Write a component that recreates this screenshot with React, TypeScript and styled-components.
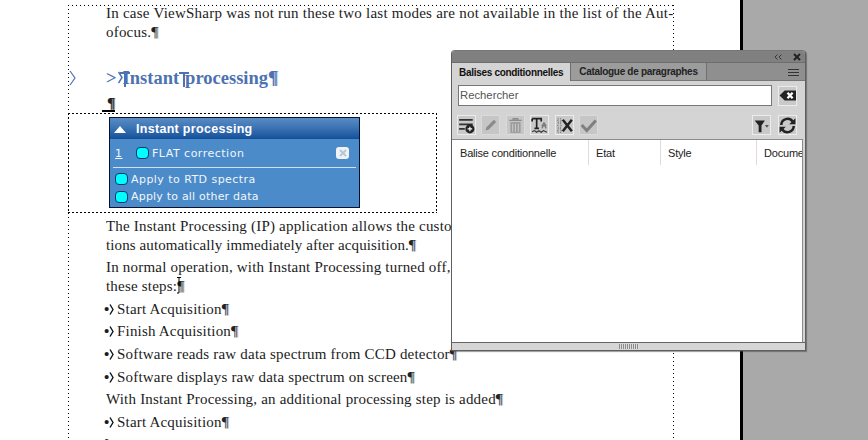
import React from "react";
import styled, { createGlobalStyle } from "styled-components";

const Global = createGlobalStyle`
  html, body { margin: 0; padding: 0; width: 868px; height: 440px; overflow: hidden; background: #a9a9a9; }
  #root { width: 868px; height: 440px; }
`;

const Screen = styled.div`
  position: relative;
  width: 868px;
  height: 440px;
  overflow: hidden;
  background: #a9a9a9;
  display: flex;
`;
const DocPage = styled.div`
  box-sizing: border-box;
  width: 743px;
  height: 440px;
  padding: 5px 0 0 68px;
  background: #fff;
  border-right: 3px solid #000;
  flex: none;
`;
const Frame = styled.div`
  box-sizing: border-box;
  width: 606px;
  height: 460px;
  padding: 1px 1px 0 1px;
  background-image:
    repeating-linear-gradient(90deg, #000 0 1px, transparent 1px 4px),
    repeating-linear-gradient(180deg, #000 0 1px, transparent 1px 4px),
    repeating-linear-gradient(180deg, #000 0 1px, transparent 1px 4px);
  background-size: 100% 1px, 1px 100%, 1px 100%;
  background-position: 0 0, 0 0, 100% 0;
  background-repeat: no-repeat;
  font-family: "Liberation Serif", serif;
  font-size: 15px;
  color: #1c1c22;
`;
const Line = styled.div<{ $top?: number; $w?: number }>`
  height: 19px;
  line-height: 19px;
  margin-top: ${(p) => p.$top ?? 0}px;
  padding-left: 37px;
  white-space: nowrap;
  letter-spacing: ${(p) => p.$w ?? 0.2}px;
`;
const Pilcrow = styled.span<{ $blue?: boolean }>`
  color: ${(p) => (p.$blue ? "#4d72b2" : "#222")};
  text-shadow: 1px 0 ${(p) => (p.$blue ? "#b5c3dd" : "#aab0b4")};
`;
const Bullet = styled.span`
  display: inline-flex;
  align-items: center;
  width: 11px;
  margin-left: -2px;
  margin-right: 2px;
  font-weight: bold;
`;
const Heading = styled.div`
  position: relative;
  height: 22px;
  line-height: 22px;
  margin-top: 25px;
  padding-left: 37px;
  white-space: nowrap;
  font-size: 18.5px;
  font-weight: bold;
  color: #4d72b2;
`;
const MarginMark = styled.svg`
  position: absolute;
  left: 0;
  top: 3px;
`;
const TabMark = styled.svg`
  margin-left: 1px;
`;
const NbspMark = styled.span<{ $before?: number; $after?: number }>`
  display: inline-block;
  position: relative;
  width: 10px;
  height: 15px;
  margin-left: ${(p) => p.$before ?? 0}px;
  margin-right: ${(p) => p.$after ?? 0}px;
  vertical-align: -3px;
  border-top: 2px solid #4d72b2;
  box-sizing: border-box;
  &::before {
    content: "";
    position: absolute;
    left: 4px;
    top: 0;
    width: 2px;
    height: 13px;
    background: #4d72b2;
  }
`;
const AnchorLine = styled.div`
  height: 15px;
  margin-top: 7px;
  padding-left: 33px;
  line-height: 15px;
  font-weight: bold;
  font-size: 15px;
`;
const Anchor = styled.span`
  display: inline-block;
  width: 13px;
  border-bottom: 2px solid #000;
  height: 13px;
  line-height: 13px;
  text-align: right;
  color: #222;
  text-shadow: 1px 0 #999;
`;
const WidgetFrame = styled.div`
  box-sizing: border-box;
  width: 369px;
  height: 100px;
  margin: 2px 0 0 -1px;
  padding: 4px 0 0 41px;
  background-image:
    repeating-linear-gradient(90deg, #000 0 2px, transparent 2px 4px),
    repeating-linear-gradient(90deg, #000 0 2px, transparent 2px 4px),
    repeating-linear-gradient(180deg, #000 0 2px, transparent 2px 4px),
    repeating-linear-gradient(180deg, #000 0 2px, transparent 2px 4px);
  background-size: 100% 1px, 100% 1px, 1px 100%, 1px 100%;
  background-position: 0 0, 0 100%, 0 0, 100% 0;
  background-repeat: no-repeat;
`;
const Widget = styled.div`
  box-sizing: border-box;
  width: 251px;
  height: 91px;
  border: 1px solid #04122e;
  background: #4c8bc9;
  font-family: "DejaVu Sans", sans-serif;
  color: #f0f6fb;
  font-size: 11px;
`;
const WidgetHead = styled.div`
  display: flex;
  align-items: center;
  height: 21px;
  padding-left: 3px;
  gap: 9px;
  background: linear-gradient(#5a8cc4 0%, #3d74b4 45%, #14509a 100%);
  font-family: "Liberation Sans", sans-serif;
  font-weight: bold;
  font-size: 12.5px;
  letter-spacing: 0.3px;
  color: #fff;
`;
const WidgetRow = styled.div<{ $h?: number; $w?: number }>`
  display: flex;
  align-items: center;
  height: ${(p) => p.$h ?? 17}px;
  padding-left: 5px;
  letter-spacing: ${(p) => p.$w ?? 0.2}px;
  white-space: nowrap;
`;
const StepNo = styled.span`
  width: 21px;
  text-decoration: underline;
`;
const Led = styled.span`
  flex: none;
  width: 11px;
  height: 10px;
  margin-right: 3px;
  border-radius: 4px;
  border: 1px solid #06396f;
  background: #0ff;
`;
const CloseChip = styled.span`
  margin-left: auto;
  margin-right: 10px;
  width: 13px;
  height: 12px;
  border-radius: 3px;
  background: #eef3f7;
  display: grid;
  place-items: center;
`;
const WidgetRule = styled.div`
  height: 1px;
  margin: 0 3px 2px 3px;
  background: #cfe2f3;
`;
const Cursor = styled.svg`
  position: absolute;
  left: 176px;
  top: 277px;
`;

const Palette = styled.div`
  position: absolute;
  left: 451px;
  top: 50px;
  box-sizing: border-box;
  width: 355px;
  height: 301px;
  border: 1px solid #5e5e5e;
  border-top-color: #777;
  border-radius: 4px 4px 0 0;
  background: #d4d4d4;
  box-shadow: 1px 1px 1px rgba(70, 70, 70, 0.55);
  font-family: "Liberation Sans", sans-serif;
  display: flex;
  flex-direction: column;
`;
const TitleBar = styled.div`
  box-sizing: border-box;
  height: 12px;
  flex: none;
  display: flex;
  align-items: center;
  justify-content: flex-end;
  gap: 11px;
  padding-right: 4px;
  background: #808080;
  border-radius: 3px 3px 0 0;
  border-bottom: 1px solid #6e6e6e;
`;
const TabBar = styled.div`
  box-sizing: border-box;
  height: 18px;
  flex: none;
  display: flex;
  background: #8f8f8f;
  align-items: stretch;
  border-bottom: 1px solid #777;
  position: relative;
`;
const Tab = styled.div<{ $active?: boolean }>`
  box-sizing: border-box;
  padding: 0 ${(p) => (p.$active ? 7 : 8)}px;
  display: flex;
  align-items: center;
  font-size: 10px;
  letter-spacing: -0.3px;
  font-weight: bold;
  white-space: nowrap;
  color: ${(p) => (p.$active ? "#111" : "#222")};
  background: ${(p) => (p.$active ? "#d4d4d4" : "#9c9c9c")};
  border-right: 1px solid #6f6f6f;
  margin-bottom: ${(p) => (p.$active ? -1 : 0)}px;
`;
const MenuIcon = styled.svg`
  position: absolute;
  right: 6px;
  top: 5px;
`;
const SearchRow = styled.div`
  flex: none;
  display: flex;
  align-items: center;
  gap: 6px;
  padding: 4px 8px 0 6px;
`;
const SearchInput = styled.div`
  box-sizing: border-box;
  width: 315px;
  height: 21px;
  border: 1px solid #777;
  background: #fff;
  padding-left: 1px;
  font-size: 11.3px;
  line-height: 18px;
  color: #555;
`;
const IconBtn = styled.div<{ $dim?: boolean }>`
  box-sizing: border-box;
  flex: none;
  width: 19px;
  height: 20px;
  display: grid;
  place-items: center;
  border: 1px solid ${(p) => (p.$dim ? "#dadada" : "#ececec")};
  background: ${(p) => (p.$dim ? "#c6c6c6" : "#c9c9c9")};
`;
const FilterBtn = styled(IconBtn)`
  margin-right: 2px;
`;
const ToolRow = styled.div`
  flex: none;
  display: flex;
  gap: 5.4px;
  padding: 9px 8px 0 5px;
`;
const Spacer = styled.div`
  flex: 1;
`;
const ListBox = styled.div`
  flex: 1;
  margin: 4px 2px 0 0;
  background: #fff;
  border-top: 1px solid #8a8a8a;
  border-right: 1px solid #8a8a8a;
  overflow: hidden;
`;
const ListHead = styled.div`
  display: grid;
  grid-template-columns: 136px 72px 96px 60px;
  height: 26px;
  padding-left: 1px;
  font-size: 11px;
  letter-spacing: -0.2px;
  color: #222;
`;
const ListCol = styled.div`
  box-sizing: border-box;
  padding: 7px 0 0 7px;
  white-space: nowrap;
  overflow: hidden;
  height: 25px;
  border-right: 1px solid #dcdcdc;
  &:last-child { border-right: 0; }
`;
const BottomBar = styled.div`
  flex: none;
  height: 7px;
  border-top: 1px solid #666;
  display: flex;
  justify-content: center;
  align-items: center;
  background: #d6d6d6;
`;
const Grip = styled.div`
  width: 20px;
  height: 5px;
  background: repeating-linear-gradient(90deg, #8a8a8a 0 1px, #ddd 1px 2px);
`;

const P = () => <Pilcrow>¶</Pilcrow>;
const B = () => (
  <Bullet>
    •
    <svg width="5" height="11" viewBox="0 0 5 11"><path d="M1 0.5 L4 5.5 L1 10.5" fill="none" stroke="#111" strokeWidth="1.4" /></svg>
  </Bullet>
);

const I = { width: 17, height: 17, viewBox: "0 0 15 15" };

export default function App() {
  return (
    <Screen>
      <Global />
      <DocPage>
        <Frame>
          <Line $top={-2} $w={0.24}>In case ViewSharp was not run these two last modes are not available in the list of the Aut-</Line>
          <Line>ofocus.<P /></Line>
          <Heading>
            <MarginMark width="7" height="16" viewBox="0 0 7 16"><path d="M1 1 L6 8 L1 15" fill="none" stroke="#4d72b2" strokeWidth="1.2" /></MarginMark>
            &gt;
            <TabMark width="5" height="13" viewBox="0 0 5 13"><path d="M0.5 1 L4 6.5 L0.5 12" fill="none" stroke="#4d72b2" strokeWidth="1.5" /></TabMark>
            <NbspMark $before={-3} $after={-7} />
            Instant<NbspMark $after={-4} />processing<Pilcrow $blue>¶</Pilcrow>
          </Heading>
          <AnchorLine><Anchor>¶</Anchor></AnchorLine>
          <WidgetFrame>
            <Widget>
              <WidgetHead>
                <svg width="14" height="10" viewBox="0 0 14 10"><path d="M1 9 L7 2 L13 9 Z" fill="#fff" /></svg>
                Instant processing
              </WidgetHead>
              <WidgetRow $h={28} $w={0.5}>
                <StepNo>1</StepNo>
                <Led />
                FLAT correction
                <CloseChip>
                  <svg width="8" height="8" viewBox="0 0 8 8"><path d="M1 1 L7 7 M7 1 L1 7" stroke="#b9c6d2" strokeWidth="2" /></svg>
                </CloseChip>
              </WidgetRow>
              <WidgetRule />
              <WidgetRow $w={0.45} $h={18}><Led />Apply to RTD spectra</WidgetRow>
              <WidgetRow><Led />Apply to all other data</WidgetRow>
            </Widget>
          </WidgetFrame>
          <Line $top={4}>The Instant Processing (IP) application allows the customer to configure processing opera-</Line>
          <Line $w={0.1}>tions automatically immediately after acquisition.<P /></Line>
          <Line $top={3}>In normal operation, with Instant Processing turned off, the instrument goes through</Line>
          <Line>these steps:<P /></Line>
          <Line $top={4}><B />Start Acquisition<P /></Line>
          <Line $top={3}><B />Finish Acquisition<P /></Line>
          <Line $top={4}><B />Software reads raw data spectrum from CCD detector<P /></Line>
          <Line $top={4}><B />Software displays raw data spectrum on screen<P /></Line>
          <Line $top={3}>With Instant Processing, an additional processing step is added<P /></Line>
          <Line $top={4}><B />Start Acquisition<P /></Line>
          <Line><Bullet>•</Bullet></Line>
        </Frame>
      </DocPage>
      <Cursor width="7" height="17" viewBox="0 0 7 17">
        <path d="M1 0.5 H3 V16 H1 M3 0.5 H5" stroke="#000" strokeWidth="1" fill="none" />
      </Cursor>
      <Palette>
        <TitleBar>
          <svg width="8" height="6" viewBox="0 0 8 6"><path d="M3.5 0.5 L1 3 L3.5 5.5 M7.5 0.5 L5 3 L7.5 5.5" stroke="#3a3a3a" fill="none" /></svg>
          <svg width="8" height="8" viewBox="0 0 8 8"><path d="M1 1 L7 7 M7 1 L1 7" stroke="#222" strokeWidth="2" /></svg>
        </TitleBar>
        <TabBar>
          <Tab $active>Balises conditionnelles</Tab>
          <Tab>Catalogue de paragraphes</Tab>
          <MenuIcon width="11" height="9" viewBox="0 0 11 9"><path d="M0 1.5 H11 M0 4.5 H11 M0 7.5 H11" stroke="#333" /></MenuIcon>
        </TabBar>
        <SearchRow>
          <SearchInput>Rechercher</SearchInput>
          <IconBtn>
            <svg {...I}><path d="M0.5 7.5 L5 3 H15 V12 H5 Z" fill="#222" /><path d="M7.5 5 L12 10 M12 5 L7.5 10" stroke="#fff" strokeWidth="2" /></svg>
          </IconBtn>
        </SearchRow>
        <ToolRow>
          <IconBtn>
            <svg {...I}><path d="M1 2.5 H13 M1 6.5 H13 M1 10.5 H6" stroke="#333" strokeWidth="1.6" /><circle cx="10.5" cy="10.5" r="4" fill="#222" /><path d="M8.5 10.5 H12.5 M10.5 8.5 V12.5" stroke="#fff" /></svg>
          </IconBtn>
          <IconBtn $dim>
            <svg {...I}><path d="M3 12 L4 9 L10.5 2.5 L12.5 4.5 L6 11 Z" fill="#8b8b8b" /></svg>
          </IconBtn>
          <IconBtn $dim>
            <svg {...I}><path d="M2 3 H13 M5.5 3 V1.5 H9.5 V3" stroke="#8d8d8d" fill="none" strokeWidth="1.2" /><path d="M3 4.5 H12 V14 H3 Z" fill="#9c9c9c" /><path d="M5 6 V13 M7.5 6 V13 M10 6 V13" stroke="#c6c6c6" /></svg>
          </IconBtn>
          <IconBtn>
            <svg {...I}><path d="M1 1.5 H9 V4 M5 1.5 V10 M3 10 H7 M1 1.5 V4" stroke="#222" strokeWidth="1.5" fill="none" /><path d="M9.5 8 L11.5 5 L13.5 8 M9.5 10 L11.5 7 L13.5 10" stroke="#777" fill="none" /><path d="M1 13 L3 12 L5 13.5 L7 12 L9 13.5 L11 12 L14 13.5" stroke="#333" fill="none" /></svg>
          </IconBtn>
          <IconBtn>
            <svg {...I}><path d="M1.5 1.5 H4.5 V4.5 H1.5 Z M1.5 6 H4.5 V9 H1.5 Z M1.5 10.5 H4.5 V13.5 H1.5 Z" fill="none" stroke="#777" strokeDasharray="1 1" /><path d="M6 2.5 L14 12.5 M14 2.5 L6 12.5" stroke="#222" strokeWidth="2.2" /></svg>
          </IconBtn>
          <IconBtn $dim>
            <svg {...I}><path d="M1.5 7 L6 12 L14 3" stroke="#7f7f7f" strokeWidth="2.6" fill="none" /></svg>
          </IconBtn>
          <Spacer />
          <FilterBtn>
            <svg {...I}><path d="M1.5 3 H10.5 L7.5 7.5 V13.5 H5 V7.5 Z" fill="#222" /><path d="M10.5 7 H14 L12.25 9.5 Z" fill="#555" /></svg>
          </FilterBtn>
          <IconBtn>
            <svg {...I}><path d="M2 7 A5.5 5.5 0 0 1 12 4 M13 8 A5.5 5.5 0 0 1 3 11" stroke="#222" strokeWidth="2.2" fill="none" /><path d="M14.5 1 V6.5 H9 Z M0.5 14 V8.5 H6 Z" fill="#222" /></svg>
          </IconBtn>
        </ToolRow>
        <ListBox>
          <ListHead>
            <ListCol>Balise conditionnelle</ListCol>
            <ListCol>Etat</ListCol>
            <ListCol>Style</ListCol>
            <ListCol>Document</ListCol>
          </ListHead>
        </ListBox>
        <BottomBar><Grip /></BottomBar>
      </Palette>
    </Screen>
  );
}
